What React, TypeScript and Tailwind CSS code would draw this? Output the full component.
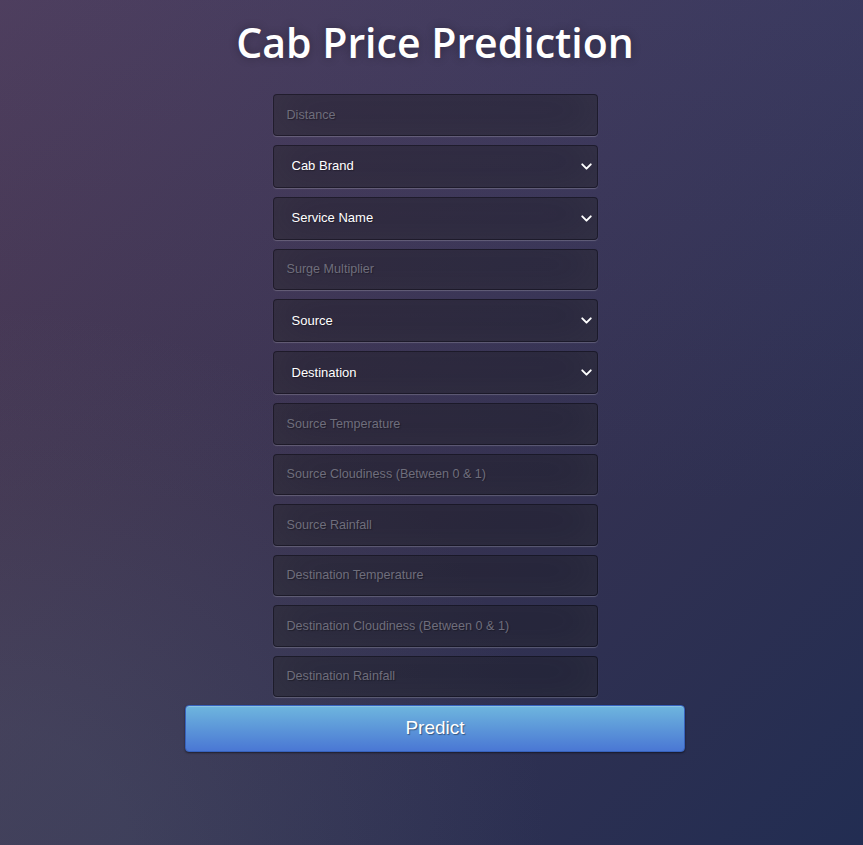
import { ChevronDown } from "lucide-react";

const fields: { label: string; kind: "input" | "select" }[] = [
  { label: "Distance", kind: "input" },
  { label: "Cab Brand", kind: "select" },
  { label: "Service Name", kind: "select" },
  { label: "Surge Multiplier", kind: "input" },
  { label: "Source", kind: "select" },
  { label: "Destination", kind: "select" },
  { label: "Source Temperature", kind: "input" },
  { label: "Source Cloudiness (Between 0 & 1)", kind: "input" },
  { label: "Source Rainfall", kind: "input" },
  { label: "Destination Temperature", kind: "input" },
  { label: "Destination Cloudiness (Between 0 & 1)", kind: "input" },
  { label: "Destination Rainfall", kind: "input" },
];

const boxCls =
  "w-full rounded-[4px] border border-black/30 bg-black/30 text-white outline-none [text-shadow:1px_1px_1px_rgba(0,0,0,0.3)] shadow-[inset_0_-5px_45px_rgba(100,100,100,0.2),0_1px_1px_rgba(255,255,255,0.2)]";

export default function App() {
  return (
    <div
      className="min-h-screen w-full flex flex-col items-center pl-[7px] bg-[radial-gradient(ellipse_at_0%_100%,rgba(104,128,138,0.18)_10%,rgba(104,128,138,0)_45%),linear-gradient(to_bottom,rgba(70,110,200,0.12)_0%,rgba(70,110,200,0)_60%),linear-gradient(135deg,#4f3850_0%,#222d52_100%)]"
      style={{ fontFamily: '"Liberation Sans", Arial, sans-serif' }}
    >
      <h1 className="mt-[14px] text-[41px] leading-[56px] font-semibold text-white [font-family:'Open_Sans',sans-serif] [text-shadow:0_0_10px_rgba(0,0,0,0.3)]">
        Cab Price Prediction
      </h1>

      <form className="mt-[24px] w-[325px] flex flex-col gap-[9px]" onSubmit={(e) => e.preventDefault()}>
        {fields.map((f) =>
          f.kind === "input" ? (
            <input
              key={f.label}
              type="text"
              placeholder={f.label}
              className={`${boxCls} h-[41.5px] px-[13px] text-[12.6px] placeholder:text-[#6f6e7c]`}
            />
          ) : (
            <div key={f.label} className="relative w-full">
              <select
                defaultValue=""
                className={`${boxCls} h-[43px] appearance-none pl-[18px] pr-[30px] text-[13px]`}
              >
                <option value="" disabled className="bg-[#2a2a3c]">
                  {f.label}
                </option>
              </select>
              <ChevronDown
                size={17}
                strokeWidth={2.75}
                className="pointer-events-none absolute right-[3px] top-[13px] text-white"
              />
            </div>
          )
        )}
      </form>

      <button
        type="button"
        className="mt-[8px] w-[500px] h-[47px] rounded-[4px] border border-[#3762bc] bg-[linear-gradient(to_bottom,#6eb6de,#4a77d4)] text-[19px] text-white [text-shadow:1px_1px_1px_rgba(0,0,0,0.4)] shadow-[inset_0_1px_0_rgba(255,255,255,0.2),0_1px_2px_rgba(0,0,0,0.5)]"
      >
        Predict
      </button>
    </div>
  );
}
